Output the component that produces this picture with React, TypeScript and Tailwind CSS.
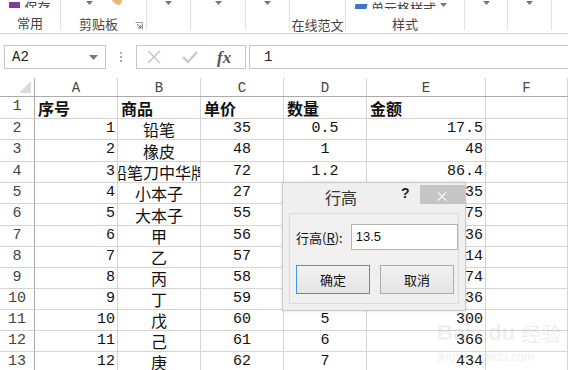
import React from 'react';

const cjk = { fontFamily: '"Noto Sans CJK SC", "Noto Sans", sans-serif' };
const mono = { fontFamily: '"Liberation Mono", "Noto Sans CJK SC", monospace' };

const colWidths = [83, 83, 83, 83, 119];
const colNames = ['A', 'B', 'C', 'D', 'E', 'F'];

type Row = { a: string; b: string; c: string; d: string; e: string };

const rows: Row[] = [
  { a: '1', b: '铅笔', c: '35', d: '0.5', e: '17.5' },
  { a: '2', b: '橡皮', c: '48', d: '1', e: '48' },
  { a: '3', b: '铅笔刀中华牌', c: '72', d: '1.2', e: '86.4' },
  { a: '4', b: '小本子', c: '27', d: '5', e: '135' },
  { a: '5', b: '大本子', c: '55', d: '5', e: '275' },
  { a: '6', b: '甲', c: '56', d: '6', e: '336' },
  { a: '7', b: '乙', c: '57', d: '2', e: '114' },
  { a: '8', b: '丙', c: '58', d: '3', e: '174' },
  { a: '9', b: '丁', c: '59', d: '4', e: '236' },
  { a: '10', b: '戊', c: '60', d: '5', e: '300' },
  { a: '11', b: '己', c: '61', d: '6', e: '366' },
  { a: '12', b: '庚', c: '62', d: '7', e: '434' },
];

const rowHeights = [22, 21, 22, 21, 21, 22, 21, 21, 21, 21, 21, 21, 21];

const Sep = () => <div className="w-px h-[30px] bg-[#e1e1e1]" />;
const Caret = () => (
  <svg width="7" height="4" viewBox="0 0 7 4" className="block">
    <path d="M0 0 H7 L3.5 4 Z" fill="#777" />
  </svg>
);

const CaretGroup: React.FC<{ w: number }> = ({ w }) => (
  <div className="h-[30px] flex justify-center pt-[1px]" style={{ width: w }}>
    <Caret />
  </div>
);

const Ribbon: React.FC = () => (
  <div className="h-[34px] border-b border-[#d4d4d4] flex items-start bg-white text-[#444]" style={cjk}>
    <div className="w-[60px] h-[30px] flex flex-col items-center">
      <div className="h-[10px] flex items-end gap-1 -mt-[2px] overflow-hidden">
        <div className="w-[11px] h-[6px] bg-[#7a3f9d]" />
        <span className="text-[13px] leading-[12px] -mb-[5px]">保存</span>
      </div>
      <span className="text-[13px] leading-none mt-[8px]">常用</span>
    </div>
    <Sep />
    <div className="w-[85px] h-[30px] flex flex-col relative">
      <div className="h-[10px] flex items-start">
        <span className="ml-[25px] mt-[1px]"><Caret /></span>
        <div className="ml-[19px] -mt-[3px] w-[10px] h-[7px] bg-[#e8b779] rotate-[30deg] rounded-sm" />
      </div>
      <span className="text-[13px] leading-none mt-[8px] ml-[18px]">剪贴板</span>
      <svg className="absolute left-[74px] top-[22px]" width="8" height="8" viewBox="0 0 8 8">
        <path d="M0.5 0.5 H7.5 V7.5" fill="none" stroke="#999" />
        <path d="M2 2 L6 6 M6 3 V6 H3" fill="none" stroke="#666" />
      </svg>
    </div>
    <Sep />
    <CaretGroup w={43} />
    <Sep />
    <CaretGroup w={54} />
    <Sep />
    <CaretGroup w={43} />
    <Sep />
    <div className="w-[55px] h-[30px] flex flex-col items-center">
      <span className="text-[13px] leading-none mt-[18px]">在线范文</span>
    </div>
    <Sep />
    <div className="w-[118px] h-[30px] flex flex-col items-center">
      <div className="h-[10px] flex items-end gap-1 -ml-[8px] overflow-hidden">
        <div className="w-[12px] h-[5px] bg-[#3a78c2] -skew-x-12" />
        <span className="text-[13px] leading-[12px] -mb-[5px]">单元格样式</span>
        <span className="mb-[2px]"><Caret /></span>
      </div>
      <span className="text-[13px] leading-none mt-[8px]">样式</span>
    </div>
    <Sep />
    <CaretGroup w={42} />
    <Sep />
    <CaretGroup w={43} />
    <Sep />
  </div>
);

const FormulaBar: React.FC = () => (
  <div className="h-[44px] flex items-start pt-[11px] bg-white">
    <div className="ml-[4px] w-[102px] h-[24px] border border-[#c6c6c6] flex items-center justify-between px-[7px]">
      <span className="text-[14px] text-[#222]" style={mono}>A2</span>
      <svg width="9" height="5" viewBox="0 0 9 5">
        <path d="M0 0 H9 L4.5 5 Z" fill="#777" />
      </svg>
    </div>
    <div className="w-[30px] h-[24px] flex flex-col items-center justify-center gap-[2px]">
      <div className="w-[2px] h-[2px] bg-[#aaa]" />
      <div className="w-[2px] h-[2px] bg-[#aaa]" />
      <div className="w-[2px] h-[2px] bg-[#aaa]" />
    </div>
    <div className="w-[110px] h-[24px] border border-[#c6c6c6] flex items-center">
      <svg className="ml-[9px]" width="16" height="16" viewBox="0 0 16 16">
        <path d="M2 2 L14 14 M14 2 L2 14" stroke="#c8c8c8" strokeWidth="1.6" />
      </svg>
      <svg className="ml-[19px]" width="18" height="16" viewBox="0 0 18 16">
        <path d="M2 8 L7 13 L16 3" fill="none" stroke="#c8c8c8" strokeWidth="2.4" />
      </svg>
      <span
        className="ml-[18px] text-[17px] italic font-bold text-[#555] leading-none"
        style={{ fontFamily: '"Liberation Serif", serif' }}
      >
        fx
      </span>
    </div>
    <div className="ml-[3px] flex-1 h-[24px] border border-r-0 border-[#c6c6c6] flex items-center pl-[14px]">
      <span className="text-[14px] text-[#222]" style={mono}>1</span>
    </div>
  </div>
);

const Cell: React.FC<{ w: number; align: 'left' | 'right' | 'center'; children?: React.ReactNode; bold?: boolean; cjkText?: boolean }> = ({
  w,
  align,
  children,
  bold,
  cjkText,
}) => (
  <div
    className={`shrink-0 h-full border-r border-b border-[#d4d4d4] flex items-center overflow-hidden whitespace-nowrap text-[#111] ${
      align === 'left' ? 'justify-start pl-[3px]' : align === 'right' ? 'justify-end pr-[2px]' : 'justify-center'
    } ${bold ? 'font-bold text-[16px]' : cjkText ? 'text-[16px]' : 'text-[15px]'}`}
    style={{ width: w, ...(cjkText || bold ? cjk : mono) }}
  >
    {children}
  </div>
);

const Sheet: React.FC = () => (
  <div className="bg-white">
    <div className="h-[19px] flex border-b border-[#ababab]">
      <div className="w-[35px] shrink-0 h-full border-r border-[#ababab] relative overflow-hidden">
        <div className="absolute right-[3px] bottom-[3px] w-0 h-0 border-l-[12px] border-l-transparent border-b-[12px] border-b-[#dcdcdc]" />
      </div>
      {colNames.map((n, i) => (
        <div
          key={n}
          className="shrink-0 h-full border-r border-[#d4d4d4] flex items-center justify-center text-[14px] text-[#444] pt-[2px]"
          style={{ width: i < 5 ? colWidths[i] : 82, ...mono }}
        >
          {n}
        </div>
      ))}
    </div>
    {[null, ...rows].map((r, idx) => (
      <div key={idx} className="flex" style={{ height: rowHeights[idx] }}>
        <div
          className="w-[35px] shrink-0 h-full border-r border-b border-[#ababab] border-b-[#d4d4d4] flex items-center justify-center text-[15px] text-[#444]"
          style={mono}
        >
          {idx + 1}
        </div>
        {r === null ? (
          <>
            <Cell w={83} align="left" bold>序号</Cell>
            <Cell w={83} align="left" bold>商品</Cell>
            <Cell w={83} align="left" bold>单价</Cell>
            <Cell w={83} align="left" bold>数量</Cell>
            <Cell w={119} align="left" bold>金额</Cell>
          </>
        ) : (
          <>
            <Cell w={83} align="right">{r.a}</Cell>
            <Cell w={83} align="center" cjkText>{r.b}</Cell>
            <Cell w={83} align="center">{r.c}</Cell>
            <Cell w={83} align="center">{r.d}</Cell>
            <Cell w={119} align="right">{r.e}</Cell>
          </>
        )}
        <div className="w-[82px] shrink-0 h-full border-r border-b border-[#d4d4d4]" />
      </div>
    ))}
  </div>
);

const RowHeightDialog: React.FC = () => (
  <div
    className="absolute left-[282px] top-[182px] w-[184px] h-[129px] bg-[#efefef] border border-[#c9c9c9] shadow-[0_0_3px_rgba(0,0,0,0.15)] text-[#111]"
    style={cjk}
  >
    <div className="h-[30px] flex items-start">
      <span className="ml-[42px] mt-[6px] text-[16px] text-[#333] leading-none">行高</span>
      <span className="ml-[44px] mt-[3px] text-[14px] font-bold text-[#222] leading-none" style={{ fontFamily: '"Liberation Sans", sans-serif' }}>?</span>
      <div className="ml-[10px] mt-[2px] w-[45px] h-[19px] bg-[#c5c5c5] flex items-center justify-center text-white text-[14px] leading-none">
        ×
      </div>
    </div>
    <div className="mx-[6px] h-[91px] border border-[#dadada] bg-[#f0f0f0] flex flex-col">
      <div className="flex items-center mt-[10px]">
        <span className="ml-[6px] text-[13px] leading-none">
          行高(<span className="underline">R</span>):
        </span>
        <div className="ml-[8px] w-[107px] h-[26px] border border-[#b5b5b5] bg-white flex items-center pl-[4px]">
          <span className="text-[13px]" style={{ fontFamily: '"Liberation Sans", sans-serif' }}>13.5</span>
        </div>
      </div>
      <div className="flex mt-[15px] ml-[6px] gap-[10px]">
        <div className="w-[74px] h-[29px] border border-[#3c96e8] bg-gradient-to-b from-[#f2f2f2] to-[#e4e4e4] flex items-center justify-center text-[13px]">
          确定
        </div>
        <div className="w-[74px] h-[29px] border border-[#acacac] bg-gradient-to-b from-[#f2f2f2] to-[#e4e4e4] flex items-center justify-center text-[13px]">
          取消
        </div>
      </div>
    </div>
  </div>
);

const Watermark: React.FC = () => (
  <div className="absolute left-[437px] top-[322px] pointer-events-none opacity-[0.13] text-[#888]">
    <div className="flex items-end gap-[2px] leading-none">
      <span className="text-[22px] font-bold" style={{ fontFamily: '"Liberation Sans", sans-serif' }}>Bai</span>
      <span className="text-[16px] text-[#777]">❀</span>
      <span className="text-[22px] font-bold" style={{ fontFamily: '"Liberation Sans", sans-serif' }}>du</span>
      <span className="text-[20px] ml-[4px]" style={cjk}>经验</span>
    </div>
    <div className="text-[12px] mt-[4px]" style={{ fontFamily: '"Liberation Sans", sans-serif' }}>jingyan.baidu.com</div>
  </div>
);

export default function App() {
  return (
    <div className="w-[568px] h-[370px] overflow-hidden bg-white relative">
      <Ribbon />
      <FormulaBar />
      <Sheet />
      <RowHeightDialog />
      <Watermark />
    </div>
  );
}
